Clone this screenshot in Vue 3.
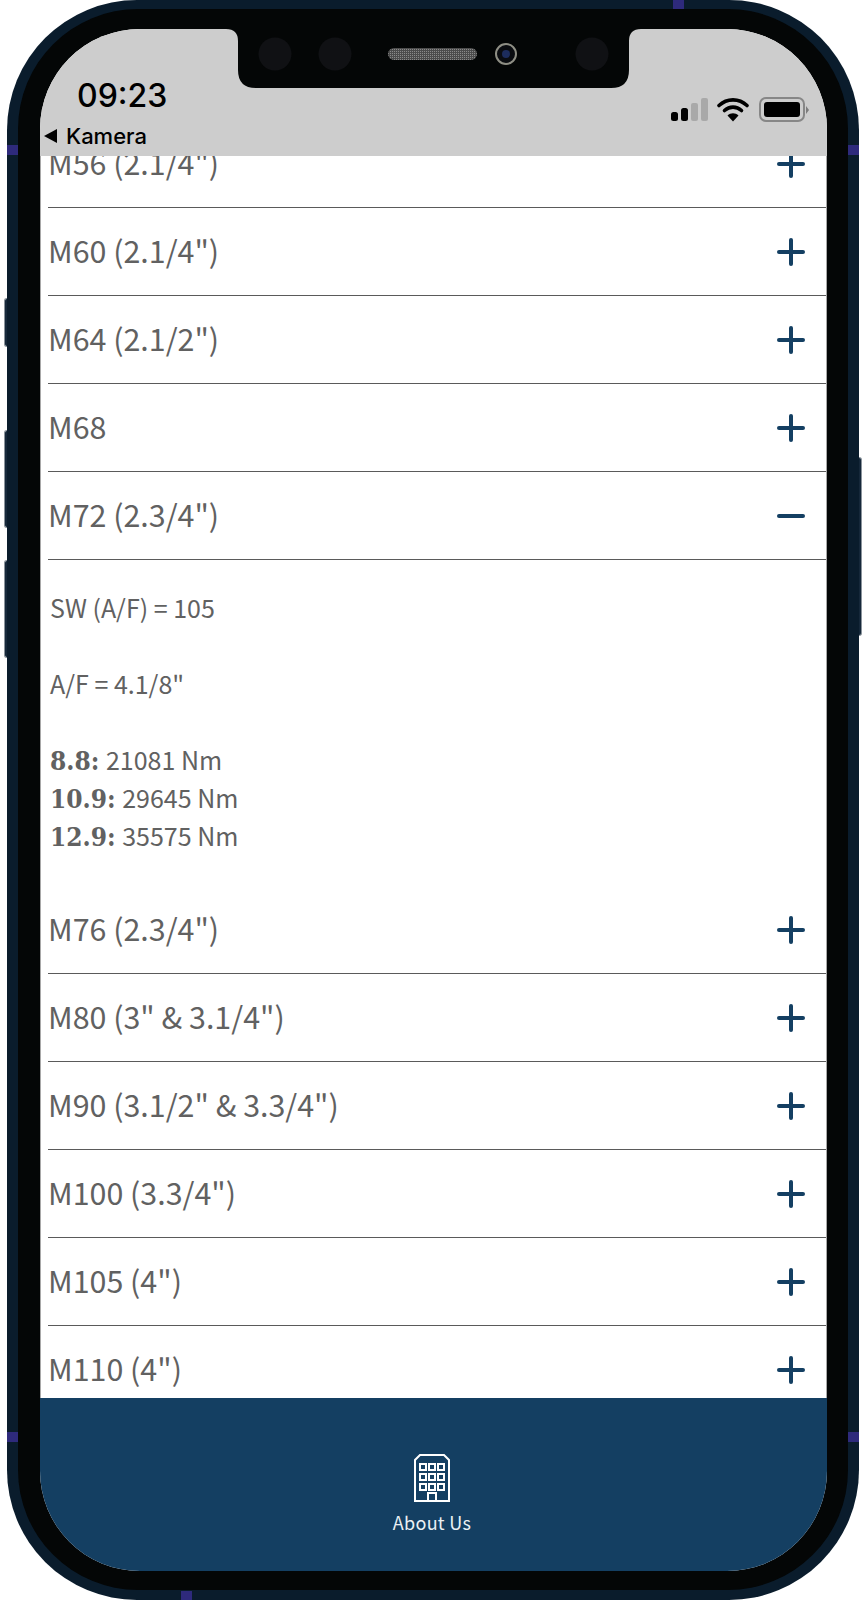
<template>
  <div class="device">
    <span class="side-btn mute"></span>
    <span class="side-btn vol-up"></span>
    <span class="side-btn vol-down"></span>
    <span class="side-btn power"></span>
    <span class="band left-top"></span>
    <span class="band right-top"></span>
    <span class="band left-bottom"></span>
    <span class="band right-bottom"></span>
    <span class="band top"></span>
    <span class="band bottom"></span>

    <div class="bezel">
      <div class="screen">
        <!-- notch -->
        <svg class="notch" width="415" height="59" viewBox="0 0 415 59">
          <defs>
            <pattern id="grill" width="2" height="2" patternUnits="userSpaceOnUse">
              <rect width="2" height="2" fill="#4c4c4c" />
              <rect width="1" height="1" fill="#8a8a8a" />
            </pattern>
          </defs>
          <path d="M0 0H415Q403 0 403 12V41Q403 59 385 59H30Q12 59 12 41V12Q12 0 0 0Z" fill="#040606" />
          <circle cx="49" cy="25" r="16.5" fill="#101114" />
          <circle cx="109" cy="25" r="16.5" fill="#101114" />
          <circle cx="366" cy="25" r="16.5" fill="#101114" />
          <rect x="162" y="19" width="89" height="12" rx="6" fill="url(#grill)" />
          <circle cx="280" cy="25" r="10" fill="#0a0c10" stroke="#8e8e84" stroke-width="2" />
          <circle cx="280" cy="25" r="4" fill="#1c2c5c" />
        </svg>

        <header class="status">
          <div class="status-left">
            <span class="time">09:23</span>
            <span class="back"><i class="back-arrow"></i>Kamera</span>
          </div>
          <div class="status-right">
            <svg width="38" height="24" viewBox="0 0 38 24">
              <rect x="0" y="14" width="7" height="9" rx="2.5" fill="#000" />
              <rect x="10" y="10" width="7" height="13" rx="2.5" fill="#000" />
              <rect x="20" y="5" width="7" height="18" rx="2" fill="#a9a9a9" />
              <rect x="30" y="0" width="7" height="23" rx="2" fill="#a9a9a9" />
            </svg>
            <svg class="wifi" width="32" height="25" viewBox="0 0 32 25">
              <path d="M2 8.5C10 1 22 1 30 8.5" fill="none" stroke="#000" stroke-width="3.6" stroke-linecap="round" />
              <path d="M7.5 13.5C12.5 9 19.5 9 24.5 13.5" fill="none" stroke="#000" stroke-width="3.6" stroke-linecap="round" />
              <path d="M10.5 18.5C13.5 15.5 18.5 15.5 21.5 18.5L16 24.5Z" fill="#000" />
            </svg>
            <div class="battery"><span class="battery-level"></span></div>
            <span class="battery-nub"></span>
          </div>
        </header>

        <main class="list">
          <div class="list-inner">
            <template v-for="row in rows" :key="row">
              <div class="row">
                <span class="row-title">{{ row }}</span>
                <svg class="toggle" width="28" height="28" viewBox="0 0 28 28">
                  <path d="M2 14H26" stroke="#143f62" stroke-width="4" stroke-linecap="round" />
                  <path v-if="row !== openRow" d="M14 2V26" stroke="#143f62" stroke-width="4" stroke-linecap="round" />
                </svg>
              </div>
              <div v-if="row === openRow" class="panel">
                <p>SW (A/F) = 105</p>
                <p class="gap">A/F = 4.1/8"</p>
                <p class="gap"><b>8.8:</b> 21081 Nm</p>
                <p><b>10.9:</b> 29645 Nm</p>
                <p><b>12.9:</b> 35575 Nm</p>
              </div>
            </template>
          </div>
        </main>

        <footer class="tabbar">
          <svg width="36" height="48" viewBox="0 0 36 48" fill="none" stroke="#fff" stroke-width="2">
            <path d="M1 47V6L6 1H30L35 6V47Z" />
            <rect x="6" y="10" width="6" height="6" />
            <rect x="15" y="10" width="6" height="6" />
            <rect x="24" y="10" width="6" height="6" />
            <rect x="6" y="20" width="6" height="6" />
            <rect x="15" y="20" width="6" height="6" />
            <rect x="24" y="20" width="6" height="6" />
            <rect x="6" y="30" width="6" height="6" />
            <rect x="15" y="30" width="6" height="6" />
            <rect x="24" y="30" width="6" height="6" />
            <path d="M14 47V39H22V47" />
          </svg>
          <span class="tab-label">About Us</span>
        </footer>
      </div>
    </div>
  </div>
</template>

<script setup>
import { ref } from 'vue'

const rows = [
  'M56 (2.1/4")',
  'M60 (2.1/4")',
  'M64 (2.1/2")',
  'M68',
  'M72 (2.3/4")',
  'M76 (2.3/4")',
  'M80 (3" & 3.1/4")',
  'M90 (3.1/2" & 3.3/4")',
  'M100 (3.3/4")',
  'M105 (4")',
  'M110 (4")',
]

const openRow = ref('M72 (2.3/4")')
</script>

<style>
html,
body {
  background: #fff;
}
</style>

<style scoped>
.device {
  position: relative;
  box-sizing: border-box;
  width: 852px;
  height: 1600px;
  margin-left: 7px;
  padding: 9px 11px 10px;
  border-radius: 130px;
  background: #0a1c2c;
}

.side-btn {
  position: absolute;
  width: 3px;
  background: #16283a;
  border: 1px solid #8b949c;
  box-sizing: border-box;
}

.mute { left: -3px; top: 298px; height: 49px; border-right: 0; border-radius: 3px 0 0 3px; }
.vol-up { left: -3px; top: 430px; height: 98px; border-right: 0; border-radius: 3px 0 0 3px; }
.vol-down { left: -3px; top: 560px; height: 98px; border-right: 0; border-radius: 3px 0 0 3px; }
.power { right: -3px; top: 457px; height: 179px; border-left: 0; border-radius: 0 3px 3px 0; }

.band {
  position: absolute;
  background: #2e2a7c;
}

.left-top { left: 0; top: 145px; width: 11px; height: 10px; }
.right-top { right: 0; top: 145px; width: 11px; height: 10px; }
.left-bottom { left: 0; top: 1432px; width: 11px; height: 10px; }
.right-bottom { right: 0; top: 1432px; width: 11px; height: 10px; }
.top { left: 666px; top: 0; width: 11px; height: 9px; }
.bottom { left: 174px; bottom: 0; width: 11px; height: 9px; }

.bezel {
  height: 100%;
  box-sizing: border-box;
  padding: 20px 21px 19px 22px;
  border-radius: 120px;
  background: #040606;
}

.screen {
  position: relative;
  height: 100%;
  display: flex;
  flex-direction: column;
  overflow: hidden;
  border-radius: 100px;
  background: #fff;
}

.notch {
  position: absolute;
  left: 186px;
  top: 0;
}

.status {
  flex: none;
  height: 127px;
  display: flex;
  justify-content: space-between;
  background: #cdcdcd;
  font-family: Inter, "Liberation Sans", sans-serif;
  color: #000;
}

.status-left {
  display: flex;
  flex-direction: column;
  padding: 49px 0 0 4px;
}

.time {
  margin-left: 33px;
  font-size: 32px;
  font-weight: 500;
  line-height: 36px;
}

.back {
  display: flex;
  align-items: center;
  margin-top: 10px;
  font-size: 22px;
  font-weight: 500;
  line-height: 24px;
}

.back-arrow {
  width: 0;
  height: 0;
  margin-right: 9px;
  border-top: 7px solid transparent;
  border-bottom: 7px solid transparent;
  border-right: 13px solid #000;
}

.status-right {
  display: flex;
  align-items: flex-start;
  padding: 69px 18px 0 0;
}

.wifi {
  margin: -1px 0 0 8px;
}

.battery {
  box-sizing: border-box;
  width: 46px;
  height: 25px;
  margin: -1px 0 0 10px;
  padding: 3px;
  border: 2px solid #878787;
  border-radius: 7px;
}

.battery-level {
  display: block;
  height: 100%;
  border-radius: 3px;
  background: #000;
}

.battery-nub {
  width: 0;
  height: 0;
  margin: 8px 0 0 1px;
  border-top: 4px solid transparent;
  border-bottom: 4px solid transparent;
  border-left: 3px solid #7c7c7c;
}

.list {
  flex: 1;
  min-height: 0;
  overflow: hidden;
  background: #fff;
  border-left: 1px solid #a8a8a8;
  border-right: 1px solid #a8a8a8;
  font-family: "Noto Sans CJK JP", "Noto Sans", sans-serif;
  color: #616161;
}

.list-inner {
  margin-top: -36px;
}

.row {
  box-sizing: border-box;
  height: 88px;
  margin-left: 7px;
  padding: 0 21px 0 0;
  display: flex;
  align-items: center;
  justify-content: space-between;
  border-bottom: 1px solid #5a5a5a;
}

.row-title {
  margin-bottom: 3px;
  font-size: 30.4px;
  line-height: 30px;
}

.panel {
  box-sizing: border-box;
  height: 324px;
  padding: 28px 0 0 9px;
  margin-bottom: 2px;
  font-size: 25px;
  line-height: 38px;
}

.panel p {
  margin: 0;
}

.panel .gap {
  margin-top: 38px;
}

.panel b {
  margin-right: 1px;
  font-family: "DejaVu Serif Condensed", "DejaVu Serif", serif;
  font-weight: 700;
  font-size: 26px;
  line-height: 1;
}

.tabbar {
  flex: none;
  height: 173px;
  box-sizing: border-box;
  padding: 56px 3px 0 0;
  display: flex;
  flex-direction: column;
  align-items: center;
  background: #143f62;
}

.tab-label {
  margin-top: 6px;
  font-family: "Noto Sans CJK JP", "Noto Sans", sans-serif;
  font-size: 18px;
  line-height: 28px;
  letter-spacing: 0.3px;
  color: #eaf0f4;
}
</style>
